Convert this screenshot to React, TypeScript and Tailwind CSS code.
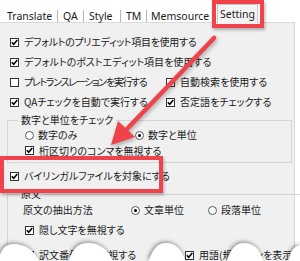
import clsx from "clsx"

const jp =
  "font-['Noto_Sans_CJK_JP',sans-serif] text-[10px] leading-[12px] text-[#1a1a1a] [font-feature-settings:'palt'] whitespace-nowrap"

function CheckBox({ checked }: { checked?: boolean }) {
  return (
    <span className="flex h-[9px] w-[9px] shrink-0 items-center justify-center border border-[#333] bg-white">
      {checked && (
        <svg width="7" height="7" viewBox="0 0 7 7">
          <path d="M0.8 3.3 L2.7 5.3 L6.3 1.1" fill="none" stroke="#000" strokeWidth="1.5" />
        </svg>
      )}
    </span>
  )
}

function Check({
  label,
  checked,
  className,
  textClass,
}: {
  label: string
  checked?: boolean
  className?: string
  textClass?: string
}) {
  return (
    <div className={clsx("flex items-center gap-[5px]", className)}>
      <CheckBox checked={checked} />
      <span className={clsx(jp, textClass)}>{label}</span>
    </div>
  )
}

function Radio({ label, checked, className }: { label: string; checked?: boolean; className?: string }) {
  return (
    <div className={clsx("flex items-center gap-[4px]", className)}>
      <span className="flex h-[9px] w-[9px] shrink-0 items-center justify-center rounded-full border border-[#5a5a5a] bg-white">
        {checked && <span className="h-[3px] w-[3px] rounded-full bg-black" />}
      </span>
      <span className={jp}>{label}</span>
    </div>
  )
}

const tabs = [
  { label: "Translate", cls: "w-[58px] pl-[7px]" },
  { label: "QA", cls: "w-[26px] pl-[5px]" },
  { label: "Style", cls: "w-[37px] pl-[5px]" },
  { label: "TM", cls: "w-[26px] pl-[5px]" },
  { label: "Memsource", cls: "w-[70px] pl-[4px] border-r-0" },
]

function Tabs() {
  return (
    <div className="flex h-[22px] items-end font-['Noto_Sans',sans-serif] text-[10.5px] text-[#1a1a1a]">
      {tabs.map((t) => (
        <div key={t.label} className={clsx("flex h-[12px] items-center border-r border-[#b5b5b5] leading-[12px]", t.cls)}>
          {t.label}
        </div>
      ))}
      <div className="relative z-10 -mb-px flex h-[19px] w-[41px] items-start justify-center border-x border-t border-[#c8c8c8] bg-[#f4f4f4] pt-[3px] leading-[12px]">
        Setting
      </div>
    </div>
  )
}

function Torn() {
  return (
    <svg
      className="absolute bottom-0 left-0 [filter:drop-shadow(-1px_-1px_2px_rgba(0,0,0,0.45))]"
      width="300"
      height="30"
      viewBox="0 0 300 30"
    >
      <g fill="#fff">
        <path d="M-2,32 C0,20 4,13 14,13 C24,13 34,18 40,32 Z" />
        <path d="M68,32 C72,20 76,12 88,12 C100,12 108,18 114,32 Z" />
        <path d="M148,32 C152,20 156,12 166,12 C176,12 182,18 186,32 Z" />
        <path d="M226,32 C230,20 234,12 244,12 C254,12 260,18 264,32 Z" />
        <path d="M288,32 C290,20 294,14 302,14 L302,32 Z" />
      </g>
    </svg>
  )
}

function Callouts() {
  return (
    <>
      <div className="absolute left-[212px] top-0 h-[28px] w-[52px] border-4 border-[#ef424a] shadow-[1px_2px_3px_rgba(0,0,0,0.3)]" />
      <div className="absolute left-0 top-[156px] h-[37px] w-[163px] border-4 border-[#ef424a] shadow-[1px_2px_3px_rgba(0,0,0,0.3)]" />
      <svg
        className="absolute left-0 top-0 [filter:drop-shadow(1px_2px_2px_rgba(0,0,0,0.3))]"
        width="300"
        height="261"
        viewBox="0 0 300 261"
      >
        <line x1="214" y1="38" x2="127" y2="129" stroke="#ef424a" strokeWidth="4.5" strokeLinecap="round" />
        <polygon points="111,145 118,121 135,137" fill="#ef424a" />
      </svg>
    </>
  )
}

export default function App() {
  return (
    <div className="relative h-[261px] w-[300px] overflow-hidden bg-white">
      <Tabs />
      <div className="h-[239px] w-[295px] border-r border-t border-[#d9d9d9] bg-[#f0f0f0] pt-[9px]">
        <Check className="h-[20px] pl-[10px]" textClass="tracking-[-0.3px]" checked label="デフォルトのプリエディット項目を使用する" />
        <Check className="h-[20px] pl-[10px]" checked label="デフォルトのポストエディット項目を使用する" />
        <div className="flex h-[20px] pl-[10px]">
          <Check className="w-[156px]" textClass="tracking-[-1.3px]" label="プレトランスレーションを実行する" />
          <Check label="自動検索を使用する" />
        </div>
        <div className="flex h-[20px] pl-[10px]">
          <Check className="w-[156px]" checked label="QAチェックを自動で実行する" />
          <Check checked label="否定語をチェックする" />
        </div>

        <fieldset className="ml-[7px] mt-[2px] w-[285px] border border-[#d5d5d5] pb-[4px]">
          <legend className={clsx("ml-[10px] px-[3px]", jp)}>数字と単位をチェック</legend>
          <div className="mt-[1px] flex h-[16px] items-center pl-[17px]">
            <Radio className="w-[110px]" label="数字のみ" />
            <Radio checked label="数字と単位" />
          </div>
          <Check className="h-[15px] pl-[17px]" checked label="桁区切りのコンマを無視する" />
        </fieldset>

        <Check className="mt-[3px] h-[20px] pl-[10px]" checked label="バイリンガルファイルを対象にする" />

        <fieldset className="ml-[7px] mt-[2px] w-[285px] border border-[#d5d5d5]">
          <legend className={clsx("ml-[10px] px-[3px]", jp)}>原文</legend>
          <div className="flex h-[20px] items-center pl-[15px]">
            <span className={clsx("w-[108px]", jp)}>原文の抽出方法</span>
            <Radio className="w-[77px]" checked label="文章単位" />
            <Radio label="段落単位" />
          </div>
          <Check className="h-[20px] pl-[17px]" checked label="隠し文字を無視する" />
          <div className="flex h-[30px] items-center pl-[17px]">
            <Check className="w-[160px]" checked label="訳文番号視を無視する" />
            <Check checked label="用語(規)ボタンを表示する" />
          </div>
        </fieldset>
      </div>
      <Torn />
      <Callouts />
    </div>
  )
}
